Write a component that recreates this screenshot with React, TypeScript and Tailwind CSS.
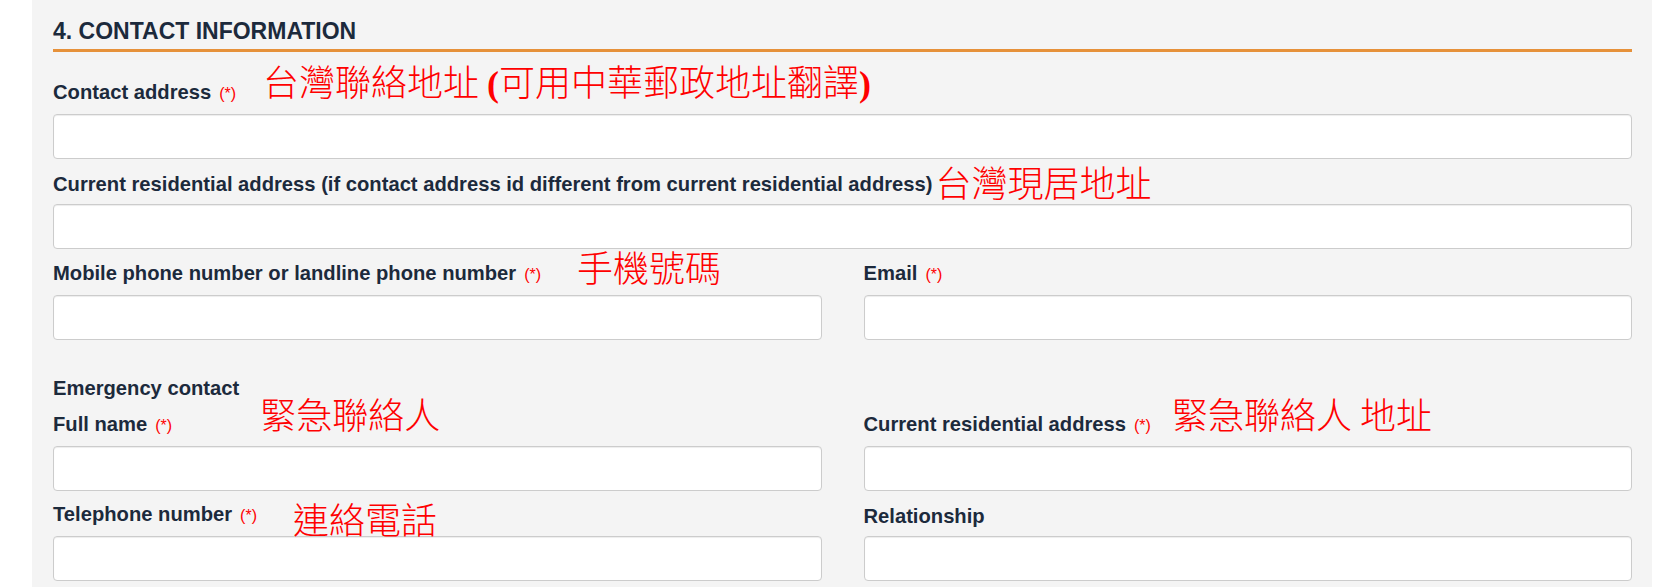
import React from "react";

function Req() {
  return <span className="ml-[8px] text-[16px] font-normal text-[#ff0000]">(*)</span>;
}

function Note({ children, className }: { children: React.ReactNode; className: string }) {
  return (
    <span
      className={`[font-family:'Noto_Sans_CJK_TC','Noto_Sans_CJK_SC',sans-serif] whitespace-nowrap text-[36px] font-light leading-none text-[#ff0000] ${className}`}
    >
      {children}
    </span>
  );
}

function Field({
  label,
  req,
  note,
  rowH,
}: {
  label: string;
  req?: boolean;
  note?: React.ReactNode;
  rowH: string;
}) {
  return (
    <div>
      <div className={`flex items-end ${rowH}`}>
        <span className="mb-[8px] whitespace-nowrap text-[20.2px] font-bold leading-[24px] text-[#1c2a3c]">
          {label}
          {req && <Req />}
        </span>
        {note}
      </div>
      <input
        type="text"
        className="block h-[45px] w-full rounded-[4px] border border-[#cccccc] bg-white shadow-[inset_0_1px_1px_rgba(0,0,0,0.075)] outline-none"
      />
    </div>
  );
}

export default function App() {
  return (
    <div className="min-h-[587px] bg-white [font-family:'Liberation_Sans',Arial,sans-serif]">
      <div className="ml-[32px] mr-[28px] min-h-[600px] bg-[#f4f4f4] px-[21px] pb-[20px] pr-[20px]">
        <div className="border-b-[3px] border-[#e6913a] pb-[5px] pt-[18px] text-[23px] font-bold leading-[26px] text-[#1c2a3c]">
          4. CONTACT INFORMATION
        </div>

        <Field
          label="Contact address"
          req
          rowH="h-[62px]"
          note={
            <Note className="mb-[12px] ml-[27px]">
              台灣聯絡地址 <span className="[font-family:'Liberation_Serif',serif] font-bold">(</span>可用中華郵政地址翻譯
              <span className="[font-family:'Liberation_Serif',serif] font-bold">)</span>
            </Note>
          }
        />

        <Field
          label="Current residential address (if contact address id different from current residential address)"
          rowH="h-[45px]"
          note={<Note className="mb-[5px] ml-[3px]">台灣現居地址</Note>}
        />

        <div className="grid grid-cols-2 gap-x-[42px]">
          <Field
            label="Mobile phone number or landline phone number"
            req
            rowH="h-[46px]"
            note={<Note className="mb-[11px] ml-[36px]">手機號碼</Note>}
          />
          <Field label="Email" req rowH="h-[46px]" />
        </div>

        <div className="pt-[36px] text-[20.2px] font-bold leading-[25px] text-[#1c2a3c]">Emergency contact</div>

        <div className="grid grid-cols-2 gap-x-[42px]">
          <Field
            label="Full name"
            req
            rowH="h-[45px]"
            note={<Note className="mb-[15px] ml-[88px]">緊急聯絡人</Note>}
          />
          <Field
            label="Current residential address"
            req
            rowH="h-[45px]"
            note={<Note className="mb-[15px] ml-[21px]">緊急聯絡人 地址</Note>}
          />
          <Field
            label="Telephone number"
            req
            rowH="h-[45px]"
            note={<Note className="mb-[0px] ml-[36px]">連絡電話</Note>}
          />
          <Field label="Relationship" rowH="h-[45px]" />
        </div>
      </div>
    </div>
  );
}
